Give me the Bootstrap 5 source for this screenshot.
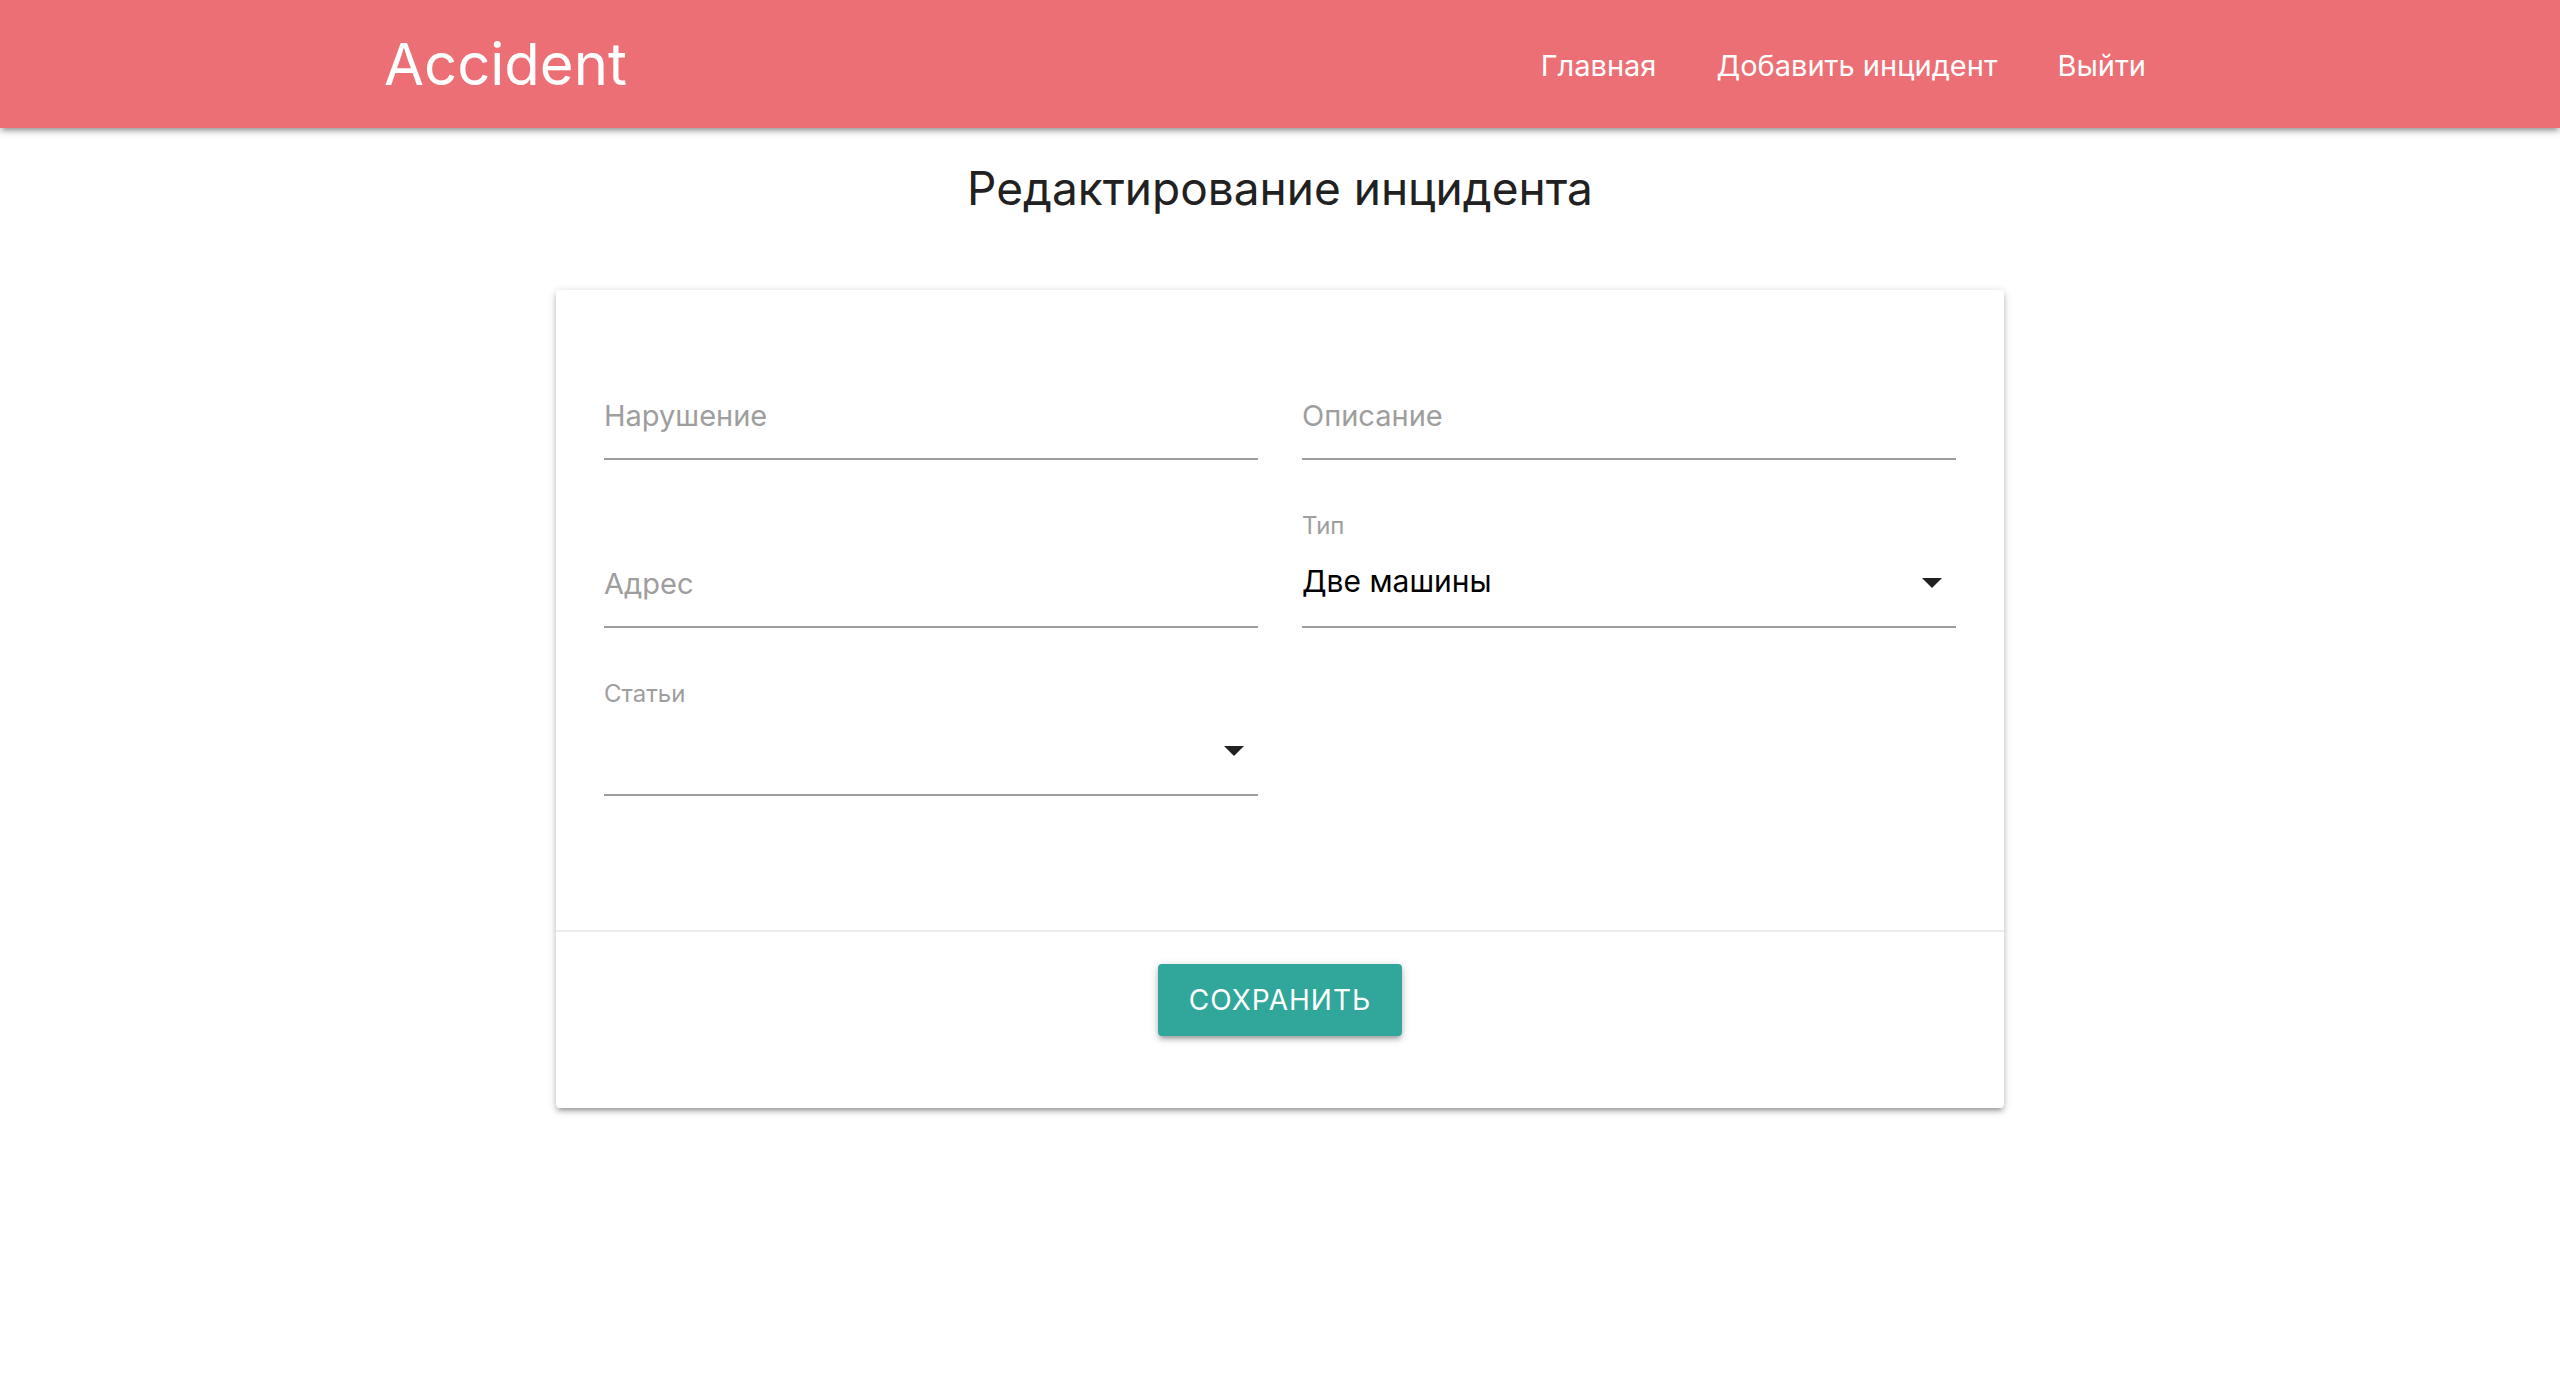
<!DOCTYPE html>
<html lang="ru">
<head>
<meta charset="utf-8">
<meta name="viewport" content="width=device-width, initial-scale=1">
<title>Accident</title>
<link href="https://cdn.jsdelivr.net/npm/bootstrap@5.3.0/dist/css/bootstrap.min.css" rel="stylesheet">
<style>
  :root {
    --depth: 0 4px 4px 0 rgba(0,0,0,.14), 0 6px 2px -4px rgba(0,0,0,.12), 0 2px 10px 0 rgba(0,0,0,.2);
  }
  body { font-family: Inter, "Liberation Sans", sans-serif; font-size: 29px; color: #212121; }
  .site-bar { background: #ec6f75; min-height: 128px; box-shadow: var(--depth); }
  .site-width { width: 70%; }
  .site-logo { font-size: 58px; line-height: 96px; }
  .site-bar .nav-link { color: #fff; padding: 4px 30px 0; line-height: 96px; }
  .page-title { font-size: 46px; line-height: 56px; font-weight: 400; padding: 32px 0 74px; }
  .form-card { max-width: 1448px; border: 0; border-radius: 4px; box-shadow: var(--depth); }
  .form-card .card-body { padding: 78px 48px 134px; }
  .form-card .row { --bs-gutter-x: 44px; --bs-gutter-y: 56px; }
  .form-card .card-footer { background: transparent; border-top: 2px solid #ebebeb; padding: 32px 48px 72px; }
  .field-label { display: block; font-size: 24px; line-height: 20px; color: #9e9e9e; }
  .line-field { height: 92px; font-size: 30px; color: #000; padding: 0; border: 0; border-bottom: 2px solid #9e9e9e; border-radius: 0; background-color: transparent; }
  .line-field:focus { box-shadow: 0 2px 0 0 #26a69a; border-color: #26a69a; }
  .resting-label { position: absolute; left: 0; top: 0; line-height: 96px; color: #9e9e9e; pointer-events: none; }
  input.line-field { padding-top: 4px; }
  input.line-field:focus + .resting-label,
  input.line-field:not(:placeholder-shown) + .resting-label { top: -20px; font-size: 24px; line-height: 20px; }
  select.line-field {
    background-image: url("data:image/svg+xml,%3Csvg xmlns='http://www.w3.org/2000/svg' viewBox='0 0 24 24'%3E%3Cpath fill='%23212121' d='M7 10l5 5 5-5z'/%3E%3C/svg%3E");
    background-size: 48px 48px; background-position: right center; background-origin: border-box; padding-right: 48px;
  }
  .save-btn { background: #31a69a; color: #fff; font-size: 28px; line-height: 72px; height: 72px; letter-spacing: 1px; padding: 0 31px; border: 0; border-radius: 4px; box-shadow: var(--depth); }
  .save-btn:hover { background: #2bbbad; color: #fff; }
</style>
</head>
<body class="min-vh-100">
<nav class="navbar site-bar p-0">
  <div class="site-width mx-auto d-flex flex-wrap justify-content-between align-items-center">
    <a class="site-logo text-white text-decoration-none" href="#">Accident</a>
    <ul class="nav">
      <li class="nav-item"><a class="nav-link" href="#">Главная</a></li>
      <li class="nav-item"><a class="nav-link" href="#">Добавить инцидент</a></li>
      <li class="nav-item"><a class="nav-link" href="#">Выйти</a></li>
    </ul>
  </div>
</nav>
<main class="site-width mx-auto pb-5">
  <h1 class="page-title text-center m-0">Редактирование инцидента</h1>
  <form class="card form-card mx-auto">
    <div class="card-body">
      <div class="row align-items-end mt-0">
        <div class="col-6 mt-0">
          <div class="position-relative">
            <input class="form-control line-field" type="text" id="violation" placeholder=" ">
            <label class="resting-label" for="violation">Нарушение</label>
          </div>
        </div>
        <div class="col-6 mt-0">
          <div class="position-relative">
            <input class="form-control line-field" type="text" id="description" placeholder=" ">
            <label class="resting-label" for="description">Описание</label>
          </div>
        </div>
        <div class="col-6">
          <div class="position-relative">
            <input class="form-control line-field" type="text" id="address" placeholder=" ">
            <label class="resting-label" for="address">Адрес</label>
          </div>
        </div>
        <div class="col-6">
          <label class="field-label" for="kind">Тип</label>
          <select class="form-select line-field" id="kind"><option>Две машины</option></select>
        </div>
        <div class="col-6">
          <label class="field-label" for="rules">Статьи</label>
          <select class="form-select line-field" id="rules"><option></option></select>
        </div>
      </div>
    </div>
    <div class="card-footer d-flex justify-content-center">
      <button class="btn save-btn text-uppercase" type="submit">Сохранить</button>
    </div>
  </form>
</main>
<script src="https://cdn.jsdelivr.net/npm/bootstrap@5.3.0/dist/js/bootstrap.bundle.min.js"></script>
</body>
</html>
